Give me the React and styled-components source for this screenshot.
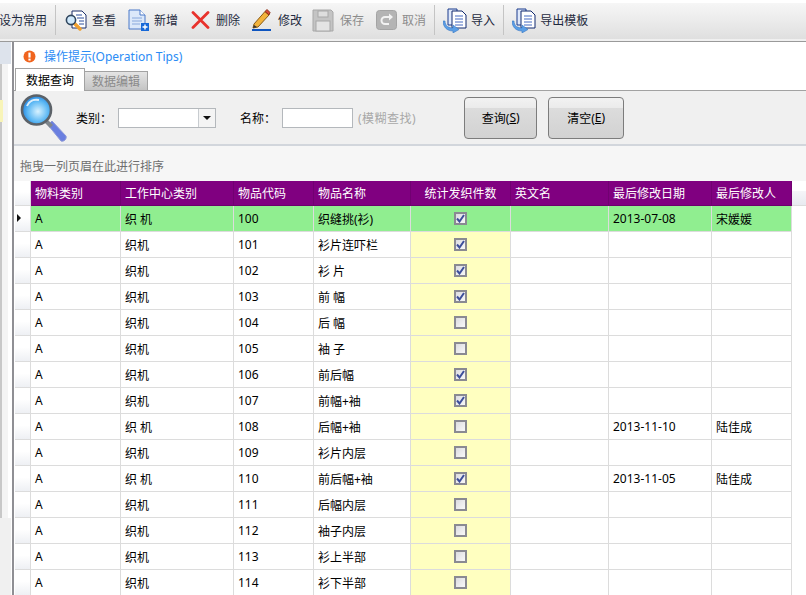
import React from "react";
import styled, { createGlobalStyle } from "styled-components";

const rows = [
  { type: "A", center: "织 机", code: "100", name: "织缝挑(衫)", checked: true, date: "2013-07-08", user: "宋媛媛" },
  { type: "A", center: "织机", code: "101", name: "衫片连吓栏", checked: true },
  { type: "A", center: "织机", code: "102", name: "衫 片", checked: true },
  { type: "A", center: "织机", code: "103", name: "前 幅", checked: true },
  { type: "A", center: "织机", code: "104", name: "后 幅", checked: false },
  { type: "A", center: "织机", code: "105", name: "袖 子", checked: false },
  { type: "A", center: "织机", code: "106", name: "前后幅", checked: true },
  { type: "A", center: "织机", code: "107", name: "前幅+袖", checked: true },
  { type: "A", center: "织 机", code: "108", name: "后幅+袖", checked: false, date: "2013-11-10", user: "陆佳成" },
  { type: "A", center: "织机", code: "109", name: "衫片内层", checked: false },
  { type: "A", center: "织 机", code: "110", name: "前后幅+袖", checked: true, date: "2013-11-05", user: "陆佳成" },
  { type: "A", center: "织机", code: "111", name: "后幅内层", checked: false },
  { type: "A", center: "织机", code: "112", name: "袖子内层", checked: false },
  { type: "A", center: "织机", code: "113", name: "衫上半部", checked: false },
  { type: "A", center: "织机", code: "114", name: "衫下半部", checked: false },
];

const columns = [
  { title: "物料类别", width: 90 },
  { title: "工作中心类别", width: 113 },
  { title: "物品代码", width: 80 },
  { title: "物品名称", width: 97 },
  { title: "统计发织件数", width: 100, center: true },
  { title: "英文名", width: 98 },
  { title: "最后修改日期", width: 103 },
  { title: "最后修改人", width: 80 },
];

const FindIcon = () => (
  <svg width="22" height="21" viewBox="0 0 22 21">
    <path d="M7 1h10l4 4v13H7z" fill="#fff" stroke="#1c2f6b" />
    <path d="M11 5h6M12 8h7M14 11h5M14 14h5" stroke="#2d4f9c" />
    <path d="M9 13l6 6" stroke="#f0a030" strokeWidth="3.5" strokeLinecap="round" />
    <circle cx="6" cy="10" r="4.6" fill="#cfe8fb" stroke="#30465e" strokeWidth="1.6" />
  </svg>
);

const NewIcon = () => (
  <svg width="21" height="22" viewBox="0 0 21 22">
    <path d="M1 1h11l5 5v14H1z" fill="#dbe8fa" stroke="#4a78c8" />
    <path d="M12 1v5h5" fill="#fff" stroke="#4a78c8" />
    <path d="M4 9h10M4 12h10M4 15h8" stroke="#88a8dc" />
    <rect x="13" y="14" width="8" height="8" fill="#1668d8" />
    <path d="M17 15.5v5M14.5 18h5" stroke="#fff" strokeWidth="1.4" />
  </svg>
);

const DeleteIcon = () => (
  <svg width="19" height="18" viewBox="0 0 19 18">
    <path d="M2 1.5l15 15M17 1.5l-15 15" stroke="#e8322c" strokeWidth="2.8" strokeLinecap="round" />
  </svg>
);

const EditIcon = () => (
  <svg width="19" height="22" viewBox="0 0 19 22">
    <path d="M2 15L13 2.500l4 3.500L6 18l-5 1z" fill="#f2b33c" stroke="#8a5a14" />
    <path d="M13 2.500l2-2 3 3-1 2.500z" fill="#d8483a" stroke="#8a3014" />
    <path d="M1 19l1-3 3 2z" fill="#333" />
    <rect x="0" y="20" width="19" height="2" fill="#0e55c0" />
  </svg>
);

const SaveIcon = () => (
  <svg width="22" height="23" viewBox="0 0 22 23">
    <path d="M1 1h18l2 2v19H1z" fill="#c4c4c4" stroke="#a8a8a8" />
    <rect x="6" y="2" width="10" height="6" fill="#dedede" stroke="#a8a8a8" />
    <rect x="4" y="12" width="14" height="10" fill="#e4e4e4" stroke="#a8a8a8" />
  </svg>
);

const CancelIcon = () => (
  <svg width="21" height="20" viewBox="0 0 21 20">
    <rect x="0.500" y="0.500" width="20" height="19" rx="3" fill="#b4b4b4" stroke="#a4a4a4" />
    <path d="M14 7H9a3.500 3.500 0 0 0 0 7h4" fill="none" stroke="#f2f2f2" strokeWidth="2" />
    <path d="M13 3.500l4 3.500-4 3.500z" fill="#f2f2f2" />
  </svg>
);

const ImportIcon = () => (
  <svg width="24" height="25" viewBox="0 0 24 25">
    <path d="M5 1h9v16H5z" fill="#dfe9fb" stroke="#1a3a8c" />
    <path d="M9 3h10l4 4v13H9z" fill="#fff" stroke="#10286e" />
    <path d="M12 8h8M12 11h8M12 14h8M12 17h8" stroke="#4468c0" />
    <path d="M2 13c0 5 4 7 8 7v-3l6 4.500-6 3.500v-2c-6 0-10-4-10-10z" fill="#5a9ee6" stroke="#3a78c4" strokeWidth="0.6" />
  </svg>
);

const AlertIcon = () => (
  <svg width="13" height="13" viewBox="0 0 13 13">
    <circle cx="6.500" cy="6.500" r="6" fill="#f0641e" />
    <rect x="5.400" y="2.600" width="2.200" height="5" fill="#fff" />
    <rect x="5.400" y="8.600" width="2.200" height="2" fill="#fff" />
  </svg>
);

const Magnifier = () => (
  <svg width="48" height="50" viewBox="0 0 48 50">
    <defs>
      <radialGradient id="lens" cx="0.55" cy="0.55" r="0.6">
        <stop offset="0" stopColor="#d8f2ff" />
        <stop offset="0.6" stopColor="#5cb8f4" />
        <stop offset="1" stopColor="#1878d8" />
      </radialGradient>
    </defs>
    <path d="M29 32l4-4 14 15c1 3-2 6-5 5z" fill="#6a7fe0" stroke="#8f9bd8" />
    <path d="M26 30l3-3 5 5-3 3z" fill="#7f868c" />
    <circle cx="17.500" cy="17" r="14.500" fill="url(#lens)" stroke="#5c6268" strokeWidth="2.600" />
    <path d="M8 13c2-5 7-7 12-6" fill="none" stroke="#fff" strokeWidth="2" opacity="0.8" />
  </svg>
);

function App() {
  return (
    <Page>
      <GlobalStyle />
      <Toolbar>
        <ClippedLabel>设为常用</ClippedLabel>
        <Separator $left={8} $right={9} />
        <ToolItem $gap={5}><FindIcon />查看</ToolItem>
        <ToolItem $left={12} $gap={5}><NewIcon />新增</ToolItem>
        <ToolItem $left={13} $gap={6}><DeleteIcon />删除</ToolItem>
        <ToolItem $left={12} $gap={7}><EditIcon />修改</ToolItem>
        <ToolItem $left={10} $gap={6} $disabled><SaveIcon />保存</ToolItem>
        <ToolItem $left={12} $gap={5} $disabled><CancelIcon />取消</ToolItem>
        <Separator $left={8} $right={8} />
        <ToolItem $gap={4}><ImportIcon />导入</ToolItem>
        <Separator $left={8} $right={8} />
        <ToolItem $gap={4}><ImportIcon />导出模板</ToolItem>
      </Toolbar>
      <Body>
        <SidePane>
          <SideHeader />
          <SideList>
            <SideMark />
          </SideList>
        </SidePane>
        <Main>
          <TipRow>
            <AlertIcon />
            <TipText>操作提示(Operation Tips)</TipText>
          </TipRow>
          <Tabs>
            <Tab $active>数据查询</Tab>
            <Tab>数据编辑</Tab>
          </Tabs>
          <SearchPanel>
            <Magnifier />
            <FieldLabel $left={9}>类别：</FieldLabel>
            <ComboBox>
              <ComboArrow />
            </ComboBox>
            <FieldLabel $left={24}>名称：</FieldLabel>
            <TextBox />
            <HintLabel>(模糊查找)</HintLabel>
            <SearchButton $left={48} $width={73}>查询(<u>S</u>)</SearchButton>
            <SearchButton $left={11} $width={76}>清空(<u>E</u>)</SearchButton>
          </SearchPanel>
          <GroupPanel>拖曳一列页眉在此进行排序</GroupPanel>
          <Grid>
            <colgroup>
              <col style={{ width: 16 }} />
              {columns.map((c) => (
                <col key={c.title} style={{ width: c.width }} />
              ))}
              <col />
            </colgroup>
            <thead>
              <HeadRow>
                <Indicator as="th" />
                {columns.map((c) => (
                  <HeadCell key={c.title} $center={c.center}>{c.title}</HeadCell>
                ))}
                <HeadFiller />
              </HeadRow>
            </thead>
            <tbody>
              {rows.map((row, i) => (
                <BodyRow key={row.code}>
                  <Indicator>{i === 0 && <RowArrow />}</Indicator>
                  <Cell $active={i === 0}>{row.type}</Cell>
                  <Cell $active={i === 0}>{row.center}</Cell>
                  <Cell $active={i === 0}>{row.code}</Cell>
                  <Cell $active={i === 0}>{row.name}</Cell>
                  <CheckCell $active={i === 0}>
                    <CheckBox>
                      {row.checked && (
                        <svg width="9" height="9" viewBox="0 0 9 9">
                          <path d="M1 4.500l2.500 3L8 1" fill="none" stroke="#3d4f9a" strokeWidth="2" />
                        </svg>
                      )}
                    </CheckBox>
                  </CheckCell>
                  <Cell $active={i === 0} />
                  <Cell $active={i === 0}>{row.date}</Cell>
                  <Cell $active={i === 0}>{row.user}</Cell>
                  <td />
                </BodyRow>
              ))}
            </tbody>
          </Grid>
        </Main>
      </Body>
    </Page>
  );
}

export default App;

const GlobalStyle = createGlobalStyle`
  html, body {
    margin: 0;
    padding: 0;
    background: #fff;
    overflow: hidden;
  }
  body {
    font-family: "Noto Sans", "Noto Sans CJK SC", sans-serif;
    font-size: 12px;
    color: #000;
  }
`;

const Page = styled.div`
  width: 806px;
  height: 595px;
  overflow: hidden;
  display: flex;
  flex-direction: column;
`;

const Toolbar = styled.div`
  height: 38px;
  margin-top: 3px;
  padding-bottom: 2px;
  display: flex;
  align-items: center;
  flex-shrink: 0;
  box-sizing: border-box;
  background: linear-gradient(#f6f6f6, #ebebeb 50%, #dfdfdf);
  border-bottom: 2px solid #f0f0f0;
  color: #1e2a3e;
`;

const ClippedLabel = styled.span`
  margin-left: -1px;
  white-space: nowrap;
`;

const Separator = styled.div`
  width: 1px;
  height: 30px;
  background: #c4c4c4;
  margin-left: ${(p) => p.$left}px;
  margin-right: ${(p) => p.$right}px;
`;

const ToolItem = styled.div`
  display: flex;
  align-items: center;
  white-space: nowrap;
  gap: ${(p) => p.$gap}px;
  margin-left: ${(p) => p.$left || 0}px;
  color: ${(p) => (p.$disabled ? "#8c8c8c" : "inherit")};
`;

const Body = styled.div`
  flex: 1;
  display: flex;
  min-height: 0;
  border-top: 1px solid #9a9a9a;
`;

const SidePane = styled.div`
  width: 12px;
  flex-shrink: 0;
  display: flex;
  flex-direction: column;
  background: #f0f0f0;
  border-right: 1px solid #fff;
  box-sizing: border-box;
`;

const SideHeader = styled.div`
  height: 22px;
  background: #dde3ec;
`;

const SideList = styled.div`
  height: 454px;
  padding-top: 36px;
  box-sizing: border-box;
  background: linear-gradient(to right, #c8c8c8 2px, #f4f4f4 2px, #f4f4f4 8px, #fff 8px);
`;

const SideMark = styled.div`
  width: 3px;
  height: 22px;
  background: #f8f4b8;
`;

const Main = styled.div`
  flex: 1;
  min-width: 0;
  display: flex;
  flex-direction: column;
  border-left: 2px solid #8f8f94;
  background: #fff;
`;

const TipRow = styled.div`
  height: 26px;
  flex-shrink: 0;
  display: flex;
  align-items: center;
  gap: 8px;
  padding: 2px 0 0 9px;
  box-sizing: border-box;
`;

const TipText = styled.span`
  color: #2b8cf5;
`;

const Tabs = styled.div`
  height: 22px;
  flex-shrink: 0;
  display: flex;
  align-items: flex-end;
  padding-left: 1px;
  border-bottom: 1px solid #a2a2a2;
`;

const Tab = styled.div`
  box-sizing: border-box;
  display: flex;
  align-items: center;
  justify-content: center;
  height: ${(p) => (p.$active ? 23 : 20)}px;
  width: ${(p) => (p.$active ? 70 : 63)}px;
  margin-bottom: -1px;
  border: 1px solid #a2a2a2;
  border-bottom: ${(p) => (p.$active ? "none" : "1px solid #a2a2a2")};
  border-left: ${(p) => (p.$active ? "1px solid #a2a2a2" : "none")};
  background: ${(p) => (p.$active ? "#fff" : "linear-gradient(#e4e4e4, #c4c4c4)")};
  color: ${(p) => (p.$active ? "#000" : "#8a8a8a")};
`;

const SearchPanel = styled.div`
  height: 53px;
  flex-shrink: 0;
  display: flex;
  align-items: center;
  padding-left: 5px;
  background: #f0f0f0;
  border-bottom: 2px solid #d2d6dc;
`;

const FieldLabel = styled.span`
  margin-left: ${(p) => p.$left}px;
  width: 42px;
  white-space: nowrap;
  margin-top: 1px;
`;

const ComboBox = styled.div`
  width: 98px;
  height: 20px;
  box-sizing: border-box;
  display: flex;
  justify-content: flex-end;
  background: #fff;
  border: 1px solid #b4b8bc;
`;

const ComboArrow = styled.div`
  width: 16px;
  display: flex;
  align-items: center;
  justify-content: center;
  background: #f4f4f4;
  border-left: 1px solid #c8ccd0;
  &::after {
    content: "";
    border-left: 4px solid transparent;
    border-right: 4px solid transparent;
    border-top: 4px solid #111;
  }
`;

const TextBox = styled.div`
  width: 71px;
  height: 20px;
  box-sizing: border-box;
  background: #fff;
  border: 1px solid #b4b8bc;
`;

const HintLabel = styled.span`
  margin-left: 5px;
  color: #a8a8a8;
  letter-spacing: 0.5px;
  white-space: nowrap;
`;

const SearchButton = styled.div`
  width: ${(p) => p.$width}px;
  height: 42px;
  margin-left: ${(p) => p.$left}px;
  box-sizing: border-box;
  display: flex;
  align-items: center;
  justify-content: center;
  border: 1px solid #7c7c7c;
  border-radius: 4px;
  background: linear-gradient(#f2f2f2, #ebebeb 25%, #dcdcdc 26%, #d2d2d2);
  white-space: pre;
`;

const GroupPanel = styled.div`
  height: 35px;
  flex-shrink: 0;
  display: flex;
  align-items: center;
  padding: 4px 0 0 6px;
  box-sizing: border-box;
  background: #f6f6f6;
  color: #6e6e6e;
`;

const Grid = styled.table`
  width: 791px;
  table-layout: fixed;
  border-collapse: separate;
  border-spacing: 0;
  margin-left: 1px;
  th, td {
    padding: 0;
    box-sizing: border-box;
  }
`;

const HeadRow = styled.tr`
  height: 25px;
`;

const BodyRow = styled.tr`
  height: 26px;
`;

const Indicator = styled.td`
  background: linear-gradient(#fff 45%, #eef0f4);
  border-right: 1px solid #dcdcdc;
  border-bottom: 1px solid #dcdcdc;
  text-align: center;
`;

const RowArrow = styled.span`
  display: inline-block;
  margin-left: -7px;
  vertical-align: 1px;
  border-top: 4px solid transparent;
  border-bottom: 4px solid transparent;
  border-left: 4px solid #111;
`;

const HeadCell = styled.th`
  background: #800080;
  color: #fff;
  font-weight: normal;
  white-space: nowrap;
  overflow: hidden;
  text-align: ${(p) => (p.$center ? "center" : "left")};
  padding: ${(p) => (p.$center ? "0" : "0 0 0 4px")} !important;
  border-right: 1px solid #710071;
  border-bottom: 1px solid #6c006c;
`;

const HeadFiller = styled.th`
  background: linear-gradient(#fff 42%, #f5f5f8 43%, #e8eaf0);
  border-bottom: 1px solid #dcdcdc;
`;

const Cell = styled.td`
  background: ${(p) => (p.$active ? "#90ee90" : "#fff")};
  border-right: 1px solid #dcdcdc;
  border-bottom: 1px solid #dcdcdc;
  padding: 0 0 0 4px !important;
  white-space: nowrap;
  overflow: hidden;
`;

const CheckCell = styled(Cell)`
  background: ${(p) => (p.$active ? "#90ee90" : "#ffffc0")};
  padding: 0 !important;
`;

const CheckBox = styled.span`
  display: flex;
  align-items: center;
  justify-content: center;
  width: 13px;
  height: 13px;
  margin: 0 auto;
  box-sizing: border-box;
  border: 2px solid #8a8a92;
  background: linear-gradient(135deg, #dcdce0, #f8f8f8);
`;
